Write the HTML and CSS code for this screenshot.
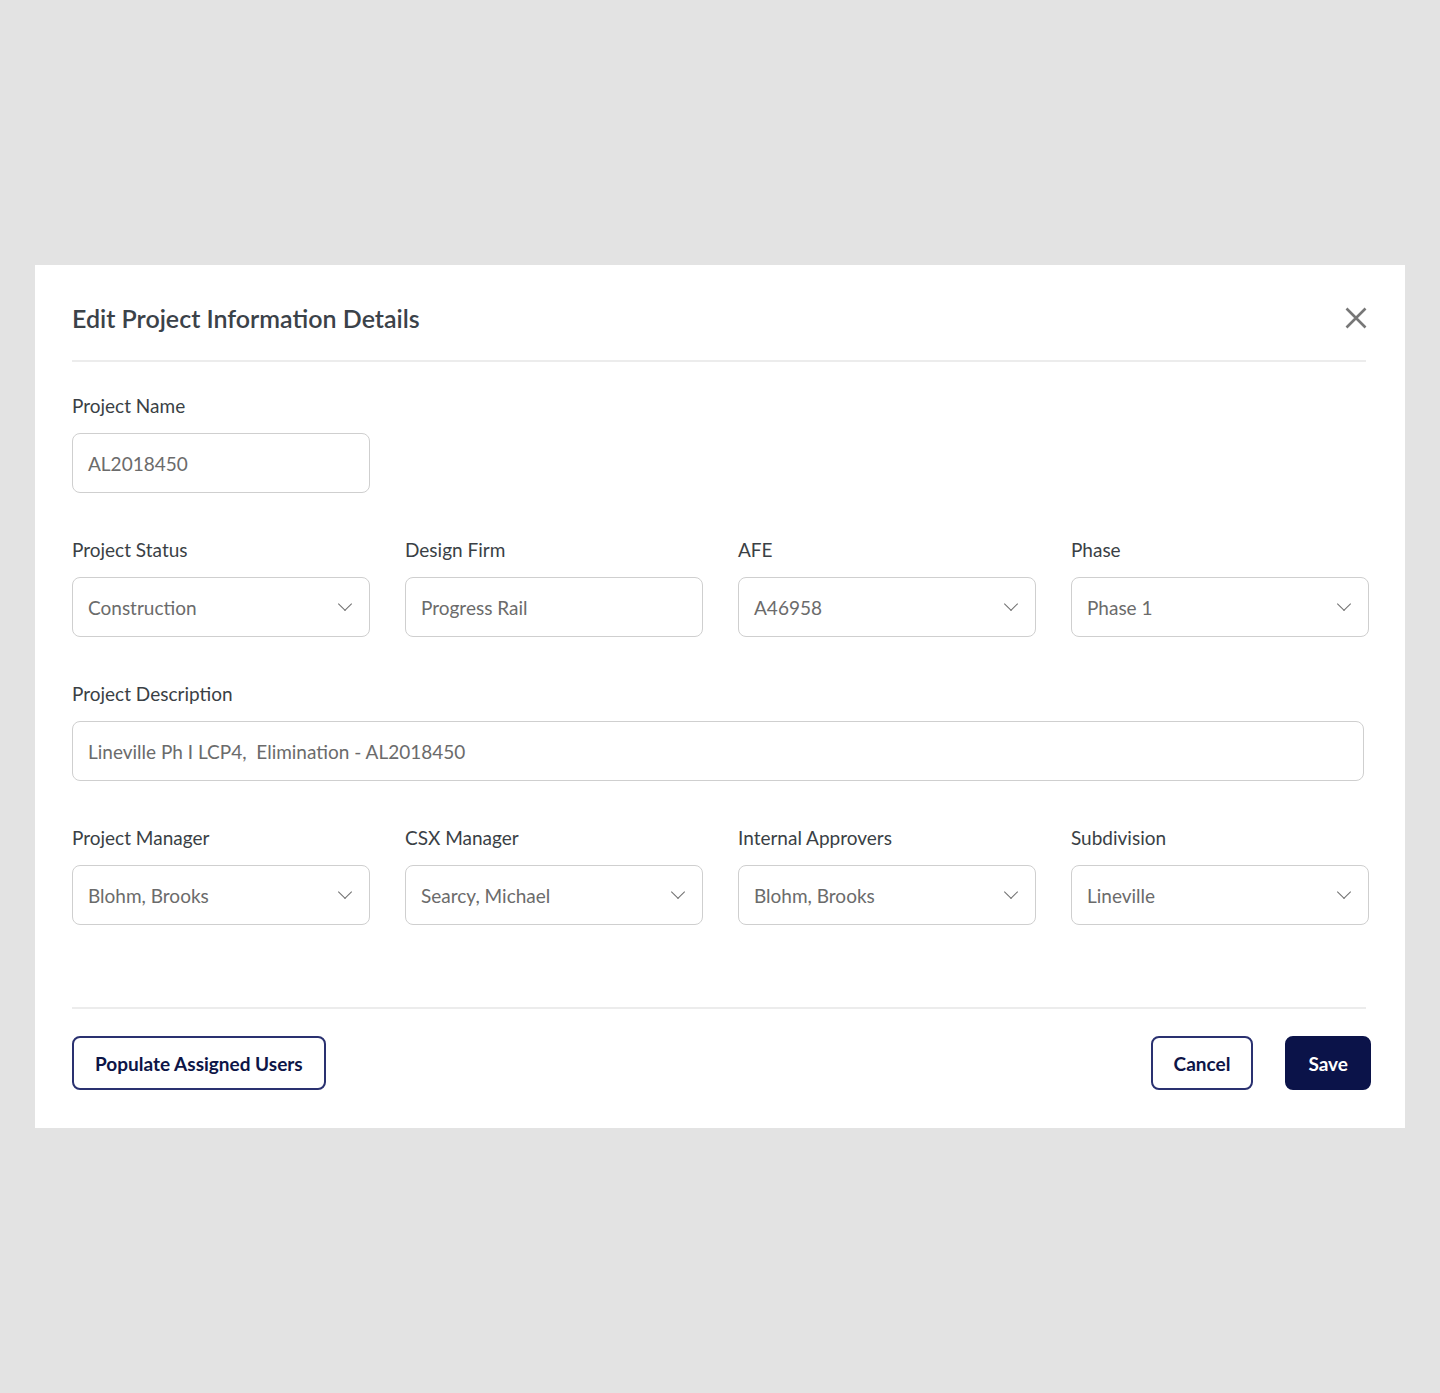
FILE: index.html
```html
<!DOCTYPE html>
<html>
<head>
<meta name="viewport" content="width=device-width, initial-scale=1">
<title>Edit Project Information Details</title>
<link rel="stylesheet" href="styles.css">
</head>
<body>
<div class="modal">
  <div class="modal-header">
    <h2>Edit Project Information Details</h2>
    <button class="close" title="Close">
      <svg width="22" height="22" viewBox="0 0 22 22"><path d="M1.5 1.5L20.5 20.5M20.5 1.5L1.5 20.5" stroke="#777" stroke-width="2.6" fill="none"/></svg>
    </button>
  </div>

  <div class="modal-body">
    <div class="row">
      <div class="field">
        <label>Project Name</label>
        <div class="input">AL2018450</div>
      </div>
    </div>

    <div class="row">
      <div class="field">
        <label>Project Status</label>
        <div class="input select">Construction<span class="chev"></span></div>
      </div>
      <div class="field">
        <label>Design Firm</label>
        <div class="input">Progress Rail</div>
      </div>
      <div class="field">
        <label>AFE</label>
        <div class="input select">A46958<span class="chev"></span></div>
      </div>
      <div class="field">
        <label>Phase</label>
        <div class="input select">Phase 1<span class="chev"></span></div>
      </div>
    </div>

    <div class="row">
      <div class="field wide">
        <label>Project Description</label>
        <div class="input">Lineville Ph I LCP4,&nbsp; Elimination - AL2018450</div>
      </div>
    </div>

    <div class="row">
      <div class="field">
        <label>Project Manager</label>
        <div class="input select">Blohm, Brooks<span class="chev"></span></div>
      </div>
      <div class="field">
        <label>CSX Manager</label>
        <div class="input select">Searcy, Michael<span class="chev"></span></div>
      </div>
      <div class="field">
        <label>Internal Approvers</label>
        <div class="input select">Blohm, Brooks<span class="chev"></span></div>
      </div>
      <div class="field">
        <label>Subdivision</label>
        <div class="input select">Lineville<span class="chev"></span></div>
      </div>
    </div>
  </div>

  <div class="modal-footer">
    <button class="btn btn-outline">Populate Assigned Users</button>
    <div class="actions">
      <button class="btn btn-outline">Cancel</button>
      <button class="btn btn-primary">Save</button>
    </div>
  </div>
</div>
</body>
</html>
```

FILE: styles.css
```css
body {
  margin: 0;
  background-color: #e3e3e3;
  font-family: Lato, "Open Sans", Arial, sans-serif;
  color: #333;
}

.modal {
  background-color: #fff;
  width: 1370px;
  height: 863px;
  margin: 265px 0 0 35px;
  padding: 0 36px 0 37px;
  box-sizing: border-box;
  display: flex;
  flex-direction: column;
}

.modal-header {
  display: flex;
  justify-content: space-between;
  align-items: center;
  padding: 35px 0 24px;
  border-bottom: 2px solid #ececec;
  margin-right: 3px;
}

.modal-header h2 {
  margin: 0;
  font-size: 25px;
  line-height: 36px;
  font-weight: 600;
  color: #3b4249;
}

.close {
  border: none;
  background: none;
  padding: 0;
  margin-right: -1px;
  display: flex;
  cursor: pointer;
}

.modal-body {
  padding-top: 33px;
  flex: 1;
}

.row {
  display: grid;
  grid-template-columns: repeat(4, 298px);
  column-gap: 35px;
  margin-bottom: 46px;
}

.field label {
  display: block;
  font-size: 19px;
  line-height: 22px;
  color: #3a3f45;
  margin-bottom: 16px;
}

.field.wide {
  grid-column: 1 / -1;
  width: 1292px;
}

.input {
  height: 60px;
  box-sizing: border-box;
  border: 1px solid #cfcfcf;
  border-radius: 8px;
  padding: 0 16px 0 15px;
  display: flex;
  align-items: center;
  justify-content: space-between;
  font-size: 19px;
  color: #6b6b6b;
}

.chev {
  width: 9px;
  height: 9px;
  border-right: 1.5px solid #6f6f6f;
  border-bottom: 1.5px solid #6f6f6f;
  transform: rotate(45deg);
  margin: -6px 3px 0 0;
}

.modal-footer {
  border-top: 2px solid #ececec;
  margin-right: 3px;
  padding: 27px 0 38px;
  display: flex;
  justify-content: space-between;
  align-items: center;
}

.actions {
  display: flex;
  gap: 32px;
  margin-right: -5px;
}

.btn {
  height: 54px;
  border-radius: 8px;
  font-family: Lato, "Open Sans", Arial, sans-serif;
  font-size: 19px;
  font-weight: 700;
  padding: 0 21px;
  cursor: pointer;
}

.btn-outline {
  background: #fff;
  color: #0d1547;
  border: 2px solid #2a3170;
}

.btn-primary {
  background: #0b1349;
  color: #fff;
  border: 2px solid #0b1349;
}
```
